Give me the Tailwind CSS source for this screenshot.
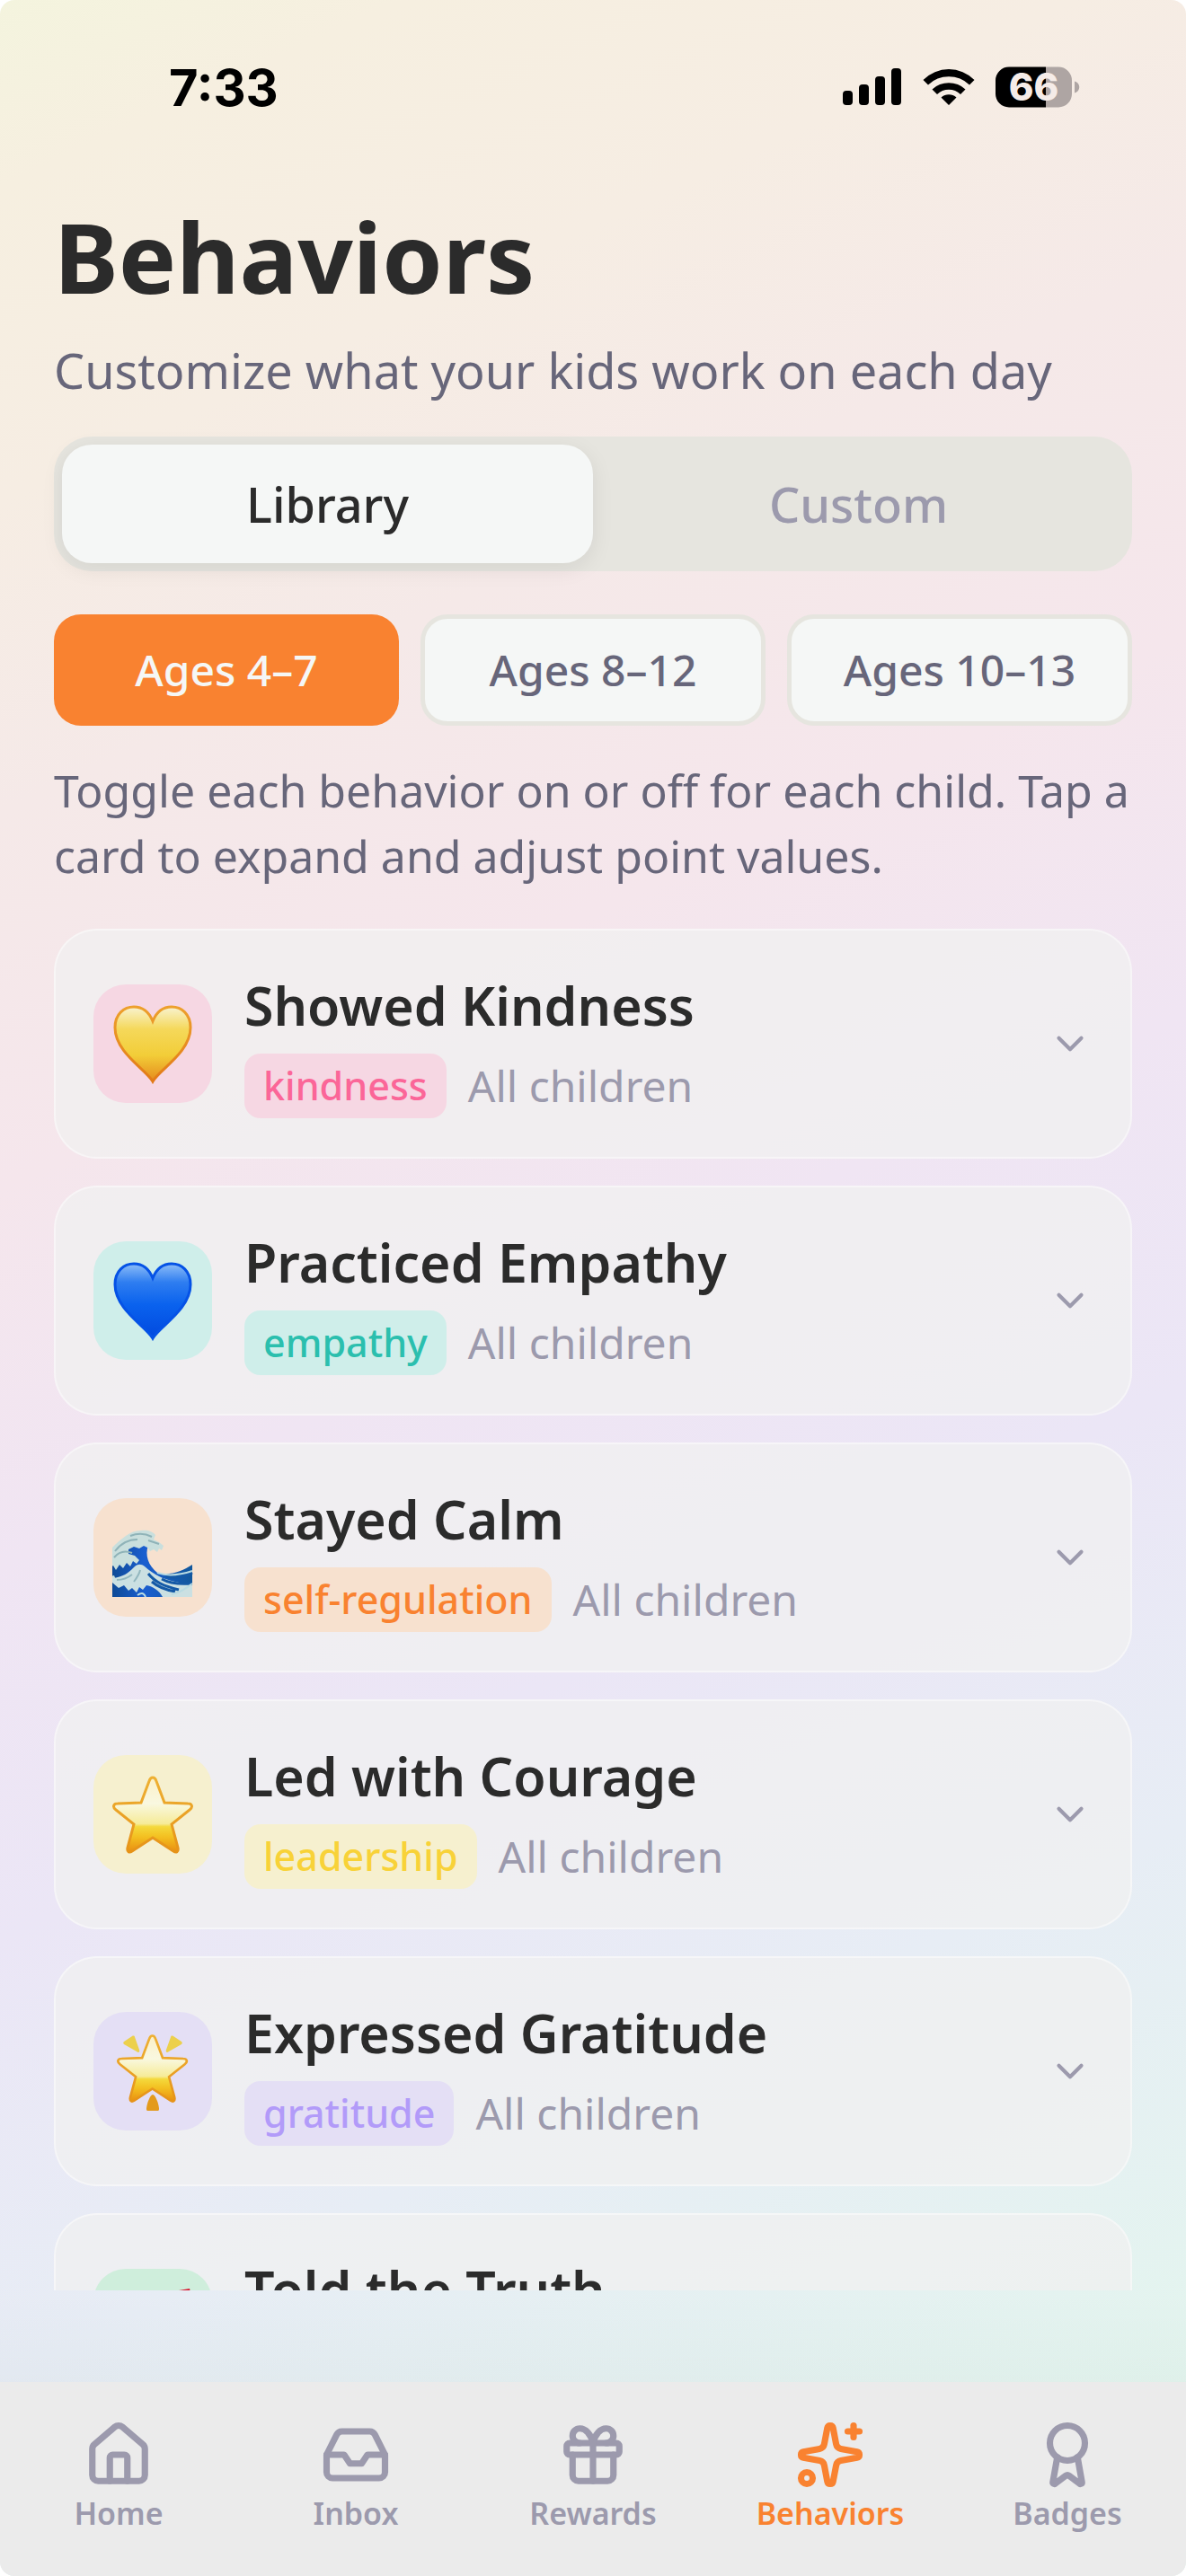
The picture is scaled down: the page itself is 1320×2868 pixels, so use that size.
<!DOCTYPE html>
<html lang="en">
<head>
  <meta charset="UTF-8">
  <meta name="viewport" content="width=device-width, initial-scale=1.0">
  <title>Behaviors</title>
  <script src="https://cdn.jsdelivr.net/npm/@tailwindcss/browser@4"></script>
</head>
<body class="bg-white font-['Noto_Sans',sans-serif] text-[#2b2b2b]">
  <div class="h-screen flex flex-col overflow-hidden rounded-2xl bg-[linear-gradient(155deg,#f4f4de_0%,#f6efe0_6%,#f6ede3_16%,#f5e9e8_26%,#f5e6ec_38%,#f0e5f3_50%,#ebe6f6_62%,#e7edf5_76%,#e2f8ec_100%)]">
    <header class="shrink-0 h-[196px] pl-[188px] pr-[118px] pt-[66px] flex items-start justify-between text-black">
      <span class="font-['Inter',sans-serif] font-bold text-[56px] leading-[64px]">7:33</span>
      <div class="flex items-center gap-[22px] pt-2">
        <svg class="w-[66px] h-[46px]" viewBox="0 0 66 46"><rect x="0" y="27" width="11" height="16" rx="4"/><rect x="18" y="20" width="11" height="23" rx="4"/><rect x="36" y="11" width="11" height="32" rx="4"/><rect x="54" y="2" width="11" height="41" rx="4"/></svg>
        <svg class="w-[60px] h-[46px]" viewBox="0 2 60 46"><path d="M1.5 17a40 40 0 0 1 57 0L53 22.500a33 33 0 0 0-46 0zM11.500 27.500a27 27 0 0 1 37 0L43 33a19 19 0 0 0-26 0zM21.500 36.500a13 13 0 0 1 17 0L30 45z"/></svg>
        <svg class="w-[94px] h-[46px]" viewBox="0 0 94 46"><path d="M15 0.500h41v45H15a15 15 0 0 1-15-15v-15a15 15 0 0 1 15-15z"/><path d="M56 0.500h14a15 15 0 0 1 15 15v15a15 15 0 0 1-15 15H56zM88 16.500c7 2 7 11 0 13z" fill="#aea5a3"/><text x="42.500" y="38" text-anchor="middle" fill="#f5ece8" class="font-['Inter',sans-serif] font-extrabold text-[42px]">66</text></svg>
      </div>
    </header>

    <main class="flex-1 min-h-0 overflow-hidden px-[60px]">
      <h1 class="text-[108px] leading-[144px] font-bold mt-[18px]">Behaviors</h1>
      <p class="mt-4 text-[54px] leading-[76px] text-[#67667a]">Customize what your kids work on each day</p>

      <div class="mt-9 flex rounded-[42px] bg-[#e6e5df] p-[9px]">
        <button class="flex-1 h-[132px] rounded-[33px] bg-[#f5f7f6] text-[54px] font-medium shadow-[0_6px_24px_rgba(0,0,0,0.08)]">Library</button>
        <button class="flex-1 h-[132px] rounded-[33px] text-[54px] font-medium text-[#9c9aad]">Custom</button>
      </div>

      <div class="mt-12 grid grid-cols-3 gap-6 text-[48px] font-medium text-[#67667a]">
        <button class="h-[124px] rounded-[30px] bg-[#f98230] text-[#f5f7f6]">Ages 4–7</button>
        <button class="h-[124px] rounded-[30px] border-[5px] border-[#e6e5df] bg-[#f5f7f6]">Ages 8–12</button>
        <button class="h-[124px] rounded-[30px] border-[5px] border-[#e6e5df] bg-[#f5f7f6]">Ages 10–13</button>
      </div>

      <p class="mt-9 text-[50px] leading-[73px] text-[#67667a]">Toggle each behavior on or off for each child. Tap a card to expand and adjust point values.</p>

      <div id="cards" class="mt-11 flex flex-col gap-[30px]"></div>
    </main>

    <div class="shrink-0 h-[102px] bg-linear-to-b from-transparent to-black/2"></div>

    <nav class="shrink-0 h-[216px] pt-[42px] grid grid-cols-5 bg-[#ebebeb] text-[34px] leading-[45px] font-semibold text-[#9c9aad]">
      <a href="#" class="flex flex-col items-center gap-1">
        <svg class="size-[78px]" viewBox="0 0 24 24" fill="none" stroke="currentColor" stroke-width="2.200" stroke-linecap="round" stroke-linejoin="round"><path d="M15 21v-8a1 1 0 0 0-1-1h-4a1 1 0 0 0-1 1v8"/><path d="M3 10a2 2 0 0 1 .709-1.528l7-5.999a2 2 0 0 1 2.582 0l7 5.999A2 2 0 0 1 21 10v9a2 2 0 0 1-2 2H5a2 2 0 0 1-2-2z"/></svg>
        Home
      </a>
      <a href="#" class="flex flex-col items-center gap-1">
        <svg class="size-[78px]" viewBox="0 0 24 24" fill="none" stroke="currentColor" stroke-width="2.200" stroke-linecap="round" stroke-linejoin="round"><path d="M22 12h-6l-2 3h-4l-2-3H2"/><path d="M5.450 5.110 2 12v6a2 2 0 0 0 2 2h16a2 2 0 0 0 2-2v-6l-3.450-6.890A2 2 0 0 0 16.760 4H7.240a2 2 0 0 0-1.790 1.110z"/></svg>
        Inbox
      </a>
      <a href="#" class="flex flex-col items-center gap-1">
        <svg class="size-[78px]" viewBox="0 0 24 24" fill="none" stroke="currentColor" stroke-width="2.200" stroke-linecap="round" stroke-linejoin="round"><rect x="3" y="8" width="18" height="4" rx="1"/><path d="M12 8v13"/><path d="M19 12v7a2 2 0 0 1-2 2H7a2 2 0 0 1-2-2v-7"/><path d="M7.500 8a2.500 2.500 0 0 1 0-5A4.800 8 0 0 1 12 8a4.800 8 0 0 1 4.500-5 2.500 2.500 0 0 1 0 5"/></svg>
        Rewards
      </a>
      <a href="#" class="flex flex-col items-center gap-1 text-[#f98230]">
        <svg class="size-[78px]" viewBox="0 0 24 24" fill="none" stroke="currentColor" stroke-width="2.200" stroke-linecap="round" stroke-linejoin="round"><path d="M11.017 2.814a1 1 0 0 1 1.966 0l1.051 5.558a2 2 0 0 0 1.594 1.594l5.558 1.051a1 1 0 0 1 0 1.966l-5.558 1.051a2 2 0 0 0-1.594 1.594l-1.051 5.558a1 1 0 0 1-1.966 0l-1.051-5.558a2 2 0 0 0-1.594-1.594l-5.558-1.051a1 1 0 0 1 0-1.966l5.558-1.051a2 2 0 0 0 1.594-1.594z"/><path d="M20 2v4"/><path d="M22 4h-4"/><circle cx="4" cy="20" r="2"/></svg>
        Behaviors
      </a>
      <a href="#" class="flex flex-col items-center gap-1">
        <svg class="size-[78px]" viewBox="0 0 24 24" fill="none" stroke="currentColor" stroke-width="2.200" stroke-linecap="round" stroke-linejoin="round"><path d="m15.477 12.890 1.515 8.526a.5.5 0 0 1-.81.470l-3.580-2.687a1 1 0 0 0-1.197 0l-3.586 2.686a.5.5 0 0 1-.81-.469l1.514-8.526"/><circle cx="12" cy="8" r="6"/></svg>
        Badges
      </a>
    </nav>
  </div>

  <svg class="absolute size-0">
    <defs>
      <linearGradient id="gold" x1="0" y1="0" x2="0" y2="1"><stop offset="0" stop-color="#f8f3d0"/><stop offset=".3" stop-color="#f5d85a"/><stop offset=".65" stop-color="#f2cd38"/><stop offset="1" stop-color="#e58a1c"/></linearGradient>
      <linearGradient id="goldEdge" x1="0" y1="0" x2="0" y2="1"><stop offset="0" stop-color="#eda02c"/><stop offset="1" stop-color="#e27a17"/></linearGradient>
      <linearGradient id="blue" x1="0" y1="0" x2="0" y2="1"><stop offset="0" stop-color="#8dbdf8"/><stop offset=".25" stop-color="#2e7df0"/><stop offset=".55" stop-color="#0a62ee"/><stop offset="1" stop-color="#0149de"/></linearGradient>
      <linearGradient id="star" x1="0" y1="0" x2="0" y2="1"><stop offset="0" stop-color="#fbf0c8"/><stop offset=".35" stop-color="#f9f8e0"/><stop offset=".62" stop-color="#f6eb98"/><stop offset=".66" stop-color="#f4d93c"/><stop offset=".8" stop-color="#f3bf20"/><stop offset="1" stop-color="#e98e10"/></linearGradient>
      <linearGradient id="starEdge" x1="0" y1="0" x2="0" y2="1"><stop offset="0" stop-color="#eeb033"/><stop offset="1" stop-color="#e69318"/></linearGradient>
      <linearGradient id="sea" x1="0" y1="0" x2="1" y2="0"><stop offset="0" stop-color="#0f4a96"/><stop offset=".4" stop-color="#1a5ed0"/><stop offset="1" stop-color="#11579c"/></linearGradient>
    </defs>
  </svg>

  <script>
    const heart = 'M45 87C38 74 3 55 3 27 3 12 13 4 24 4c10 0 17 6 21 16C49 10 56 4 66 4c11 0 21 8 21 23C87 55 52 74 45 87z';
    const star = 'M45 4c2 0 3 1 4 4l9 24 26 1c5 0 6 4 2 7L66 56l7 26c1 5-2 6-5 4L45 71 22 86c-3 2-6 1-5-4l7-26L4 40c-4-3-3-7 2-7l26-1 9-24c1-3 2-4 4-4z';

    const emoji = {
      heartGold: `<path d="${heart}" fill="url(#gold)" stroke="url(#goldEdge)" stroke-width="3"/>`,
      heartBlue: `<path d="${heart}" fill="url(#blue)" stroke="#0552e6" stroke-width="3"/>`,
      star: `<path d="${star}" fill="url(#star)" stroke="url(#starEdge)" stroke-width="3"/>`,
      glow: `<g transform="translate(5 2) scale(.88)"><path d="${star}" fill="url(#star)" stroke="url(#starEdge)" stroke-width="3"/></g>
        <path d="M22 6c2-1 3 0 3 1l5 14c1 3-1 4-3 2L13 15c-1-1-1-2 0-3zM68 6c-2-1-3 0-3 1l-5 14c-1 3 1 4 3 2l14-8c1-1 1-2 0-3z" fill="#ecd04c"/>
        <path d="M45 71c3 0 7 11 7 16 0 2-1 2-2 2H40c-1 0-2 0-2-2 0-5 4-16 7-16z" fill="#e39a1c"/>`,
      wave: `<path d="M0 42 20 24l20 8c-4 10 0 22 10 30 14 4 28-2 39-9v36H0z" fill="url(#sea)"/>
        <path d="M0 34c4-4 9-9 15-13 5-4 11-6 17-6 7-1 13 1 16 5l-2 5 6 3 5 4-2 5-3-2-2 4-4-3-4 2-3-4-4-2-5 3-6-2-6 3v5l7 2 5 5-3 4-4-3-3 6-4-4-4 6-4-4-4 6-3-5-3 2v10l4-1 2 5-7 2z" fill="#c9dfdd"/>
        <path d="M3 38c6-8 14-13 25-13M2 45c5-6 12-8 20-5M20 21c8-3 16-3 24 1M40 26l12 4" stroke="#8fb3b8" stroke-width="2" fill="none"/>
        <path d="M0 68c12-1 18-6 24-12 4-4 8-4 12-1 10 9 20 14 34 17l19 4v13H56c-4-8-12-12-18-13l-4 5-4-3-3 6-5-5-4 3-5-6-6 3-7-6z" fill="#cbe0e2"/>
        <path d="M5 70c7 0 12-2 17-6M24 72c3-4 6-8 7-13" stroke="#93b7bf" stroke-width="2" fill="none"/>
        <path d="M40 63c8 10 18 14 34 18M44 72c7 6 15 9 26 11M55 69c9 5 20 6 33 5M60 66c10 2 20 1 29-4" stroke="#1459a6" stroke-width="3" fill="none"/>
        <path d="M50 62c14 5 27 2 39-2M66 86c9-2 16-6 23-12M28 87c4-3 7-3 9 2" stroke="#b9dbe2" stroke-width="2" fill="none"/>`,
      target: `<circle cx="42" cy="52" r="38" fill="#d22b3a"/><path d="M62 5 86 1l2 9-18 14z" fill="#d8152f"/>`
    };

    const behaviors = [
      { title: 'Showed Kindness', tag: 'kindness', icon: 'heartGold', bg: 'bg-[#f6d7e3]', color: 'text-[#fb6698]' },
      { title: 'Practiced Empathy', tag: 'empathy', icon: 'heartBlue', bg: 'bg-[#cfeeea]', color: 'text-[#2bbfae]' },
      { title: 'Stayed Calm', tag: 'self-regulation', icon: 'wave', bg: 'bg-[#f7e1cf]', color: 'text-[#f98230]' },
      { title: 'Led with Courage', tag: 'leadership', icon: 'star', bg: 'bg-[#f6f0cf]', color: 'text-[#f8d238]' },
      { title: 'Expressed Gratitude', tag: 'gratitude', icon: 'glow', bg: 'bg-[#e4dff5]', color: 'text-[#b29bf9]' },
      { title: 'Told the Truth', tag: '', icon: 'target', bg: 'bg-[#cfeedc]', color: 'text-[#34c77b]' }
    ];

    document.getElementById('cards').innerHTML = behaviors.map(b => `
      <button class="w-full h-[256px] shrink-0 px-[42px] flex items-center text-left rounded-[48px] border-2 border-white/40 bg-[#f0f0f0]/75">
        <span class="size-[132px] shrink-0 rounded-[36px] flex items-center justify-center ${b.bg}">
          <svg class="size-[90px]" viewBox="0 0 90 90">${emoji[b.icon]}</svg>
        </span>
        <span class="ml-9 flex-1">
          <span class="block text-[59px] leading-[78px] font-semibold">${b.title}</span>
          <span class="mt-[15px] h-[72px] flex items-center gap-6">
            ${b.tag && `<span class="h-[72px] leading-[72px] px-[21px] rounded-[18px] text-[43px] font-medium ${b.bg} ${b.color}">${b.tag}</span>
            <span class="text-[48px] leading-[72px] text-[#9c9aad]">All children</span>`}
          </span>
        </span>
        <svg class="size-[50px] text-[#9c9aad]" viewBox="0 0 24 24" fill="none" stroke="currentColor" stroke-width="2" stroke-linecap="round" stroke-linejoin="round"><path d="m6 9 6 6 6-6"/></svg>
      </button>
    `).join('');
  </script>
</body>
</html>
